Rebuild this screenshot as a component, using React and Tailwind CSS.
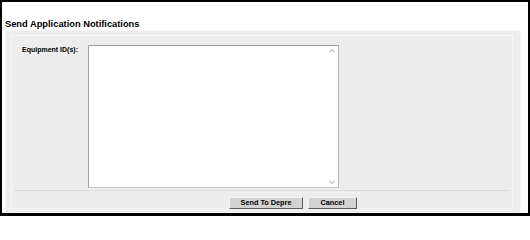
export default function App() {
  return (
    <div className="w-[530px] h-[216px] bg-white border-2 border-b-[3px] border-black flex flex-col font-['Liberation_Sans',Arial,sans-serif] text-black overflow-hidden">
      <div className="h-[28px] shrink-0 pt-[16px] pl-[3px]">
        <h1 className="text-[9.3px] leading-[12px] font-bold">Send Application Notifications</h1>
      </div>
      <div className="flex-1 ml-[3px] mr-[7px] bg-[#ededed] border border-[#f7f7f7] pt-[4px] pl-[5px] pr-[7px] pb-[2px] flex flex-col">
        <div className="flex-1 border border-[#f7f7f7] flex flex-col">
          <div className="flex pt-[9px]">
            <div className="w-[76px] shrink-0 pl-[10px] text-[7px] leading-[9px] font-bold">Equipment ID(s):</div>
            <div className="relative w-[251px] h-[143px] shrink-0">
              <textarea
                className="block w-full h-full resize-none overflow-hidden bg-white border border-t-[#9d9d9d] border-l-[#9d9d9d] border-r-[#b9b9b9] border-b-[#c9c9c9] outline-none"
                defaultValue=""
              />
              <svg className="absolute right-[3px] top-[2px]" width="8" height="7" viewBox="0 0 8 7">
                <path d="M1.5 5 L4 2.5 L6.5 5" fill="none" stroke="#c4c4c4" strokeWidth="1.2" />
              </svg>
              <svg className="absolute right-[3px] bottom-[2px]" width="8" height="7" viewBox="0 0 8 7">
                <path d="M1.5 2 L4 4.5 L6.5 2" fill="none" stroke="#c4c4c4" strokeWidth="1.2" />
              </svg>
            </div>
          </div>
          <div className="mt-[2px] mx-[2px] h-px bg-[#dcdcdc]" />
          <div className="flex gap-[5px] ml-[217px] mt-[6px]">
            <button className="w-[74px] h-[12px] bg-[#d3d3d3] border border-t-[#f4f4f4] border-l-[#f4f4f4] border-r-[#5a5a5a] border-b-[#5a5a5a] text-[7.3px] leading-[10px] font-bold flex items-center justify-center">
              Send To Depre
            </button>
            <button className="w-[49px] h-[12px] bg-[#d3d3d3] border border-t-[#f4f4f4] border-l-[#f4f4f4] border-r-[#5a5a5a] border-b-[#5a5a5a] text-[7.3px] leading-[10px] font-bold flex items-center justify-center">
              Cancel
            </button>
          </div>
        </div>
      </div>
    </div>
  );
}
